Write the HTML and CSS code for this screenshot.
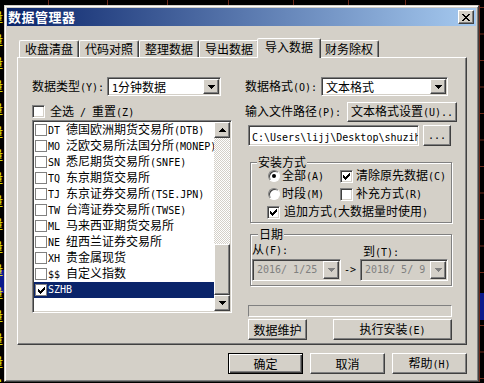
FILE: index.html
```html
<!DOCTYPE html>
<html lang="zh-CN">
<head>
  <meta charset="UTF-8" />
  <title>数据管理器</title>
  <link rel="stylesheet" href="styles.css">
</head>
<body>

<div class="screen">
  <div class="chart-top"></div>
  <div class="middle">
    <div class="chart-left">
      <div class="axis-text">量<br>量<br>量<br>量<br>量<br>量<br>量<br>量<br>量<br>量<br>量<br>量<br>量<br>量<br>量<br>量<br>量</div>
    </div>

    <div class="dialog">
      <div class="titlebar">
        <span class="title">数据管理器</span>
        <span class="btn close-btn">
          <svg width="8" height="7" viewBox="0 0 8 7" shape-rendering="crispEdges"><path d="M0 0h2v1H0zM6 0h2v1H6zM1 1h2v1H1zM5 1h2v1H5zM2 2h4v1H2zM3 3h2v1H3zM2 4h4v1H2zM1 5h2v1H1zM5 5h2v1H5zM0 6h2v1H0zM6 6h2v1H6z"/></svg>
        </span>
      </div>

      <div class="tabs">
        <div class="tab">收盘清盘</div>
        <div class="tab">代码对照</div>
        <div class="tab">整理数据</div>
        <div class="tab">导出数据</div>
        <div class="tab active">导入数据</div>
        <div class="tab">财务除权</div>
      </div>

      <div class="panel">
        <!-- left: market list -->
        <div class="col-left">
          <div class="field-row">
            <span class="label-type">数据类型<span class="m">(Y):</span></span>
            <div class="combo combo-type">
              <span class="combo-text"><span class="m">1</span>分钟数据</span>
              <span class="btn drop-btn"><svg width="7" height="4" viewBox="0 0 7 4" shape-rendering="crispEdges"><path d="M0 0h7v1H0zM1 1h5v1H1zM2 2h3v1H2zM3 3h1v1H3z"/></svg></span>
            </div>
          </div>

          <div class="check-row">
            <span class="check"></span>
            <span class="item-text">全选<span class="m"> / </span>重置<span class="m">(Z)</span></span>
          </div>

          <div class="listbox">
            <div class="items">
              <div class="item"><span class="mini-check"></span><span class="item-text"><span class="m">DT </span>德国欧洲期货交易所<span class="m">(DTB)</span></span></div>
              <div class="item"><span class="mini-check"></span><span class="item-text"><span class="m">MO </span>泛欧交易所法国分所<span class="m">(MONEP)</span></span></div>
              <div class="item"><span class="mini-check"></span><span class="item-text"><span class="m">SN </span>悉尼期货交易所<span class="m">(SNFE)</span></span></div>
              <div class="item"><span class="mini-check"></span><span class="item-text"><span class="m">TQ </span>东京期货交易所</span></div>
              <div class="item"><span class="mini-check"></span><span class="item-text"><span class="m">TJ </span>东京证券交易所<span class="m">(TSE.JPN)</span></span></div>
              <div class="item"><span class="mini-check"></span><span class="item-text"><span class="m">TW </span>台湾证券交易所<span class="m">(TWSE)</span></span></div>
              <div class="item"><span class="mini-check"></span><span class="item-text"><span class="m">ML </span>马来西亚期货交易所</span></div>
              <div class="item"><span class="mini-check"></span><span class="item-text"><span class="m">NE </span>纽西兰证券交易所</span></div>
              <div class="item"><span class="mini-check"></span><span class="item-text"><span class="m">XH </span>贵金属现货</span></div>
              <div class="item"><span class="mini-check"></span><span class="item-text"><span class="m">$$ </span>自定义指数</span></div>
              <div class="item selected"><span class="mini-check"><svg width="7" height="7" viewBox="0 0 7 7" shape-rendering="crispEdges"><path d="M6 0h1v3H6zM5 1h1v3H5zM4 2h1v3H4zM3 3h1v3H3zM2 4h1v3H2zM1 3h1v3H1zM0 2h1v3H0z"/></svg></span><span class="item-text m">SZHB</span></div>
            </div>
            <div class="scrollbar">
              <span class="btn sb-btn"><svg width="7" height="4" viewBox="0 0 7 4" shape-rendering="crispEdges"><path d="M3 0h1v1H3zM2 1h3v1H2zM1 2h5v1H1zM0 3h7v1H0z"/></svg></span>
              <span class="btn sb-thumb"></span>
              <span class="btn sb-btn"><svg width="7" height="4" viewBox="0 0 7 4" shape-rendering="crispEdges"><path d="M0 0h7v1H0zM1 1h5v1H1zM2 2h3v1H2zM3 3h1v1H3z"/></svg></span>
            </div>
          </div>
        </div>

        <!-- right: import options -->
        <div class="col-right">
          <div class="field-row">
            <span class="label-format">数据格式<span class="m">(O):</span></span>
            <div class="combo combo-format">
              <span class="combo-text">文本格式</span>
              <span class="btn drop-btn"><svg width="7" height="4" viewBox="0 0 7 4" shape-rendering="crispEdges"><path d="M0 0h7v1H0zM1 1h5v1H1zM2 2h3v1H2zM3 3h1v1H3z"/></svg></span>
            </div>
          </div>

          <div class="path-row">
            <span>输入文件路径<span class="m">(P):</span></span>
            <span class="btn btn-textfmt"><span>文本格式设置<span class="m">(U)..</span></span></span>
          </div>

          <div class="file-row">
            <div class="input"><span class="m">C:\Users\lijj\Desktop\shuzihb</span></div>
            <span class="btn btn-browse"><span class="m">...</span></span>
          </div>

          <fieldset class="group group-mode">
            <legend>安装方式</legend>
            <div class="opt-grid">
              <span class="opt"><span class="radio on"></span><span>全部<span class="m">(A)</span></span></span>
              <span class="opt opt-check"><span class="check"><svg width="7" height="7" viewBox="0 0 7 7" shape-rendering="crispEdges"><path d="M6 0h1v3H6zM5 1h1v3H5zM4 2h1v3H4zM3 3h1v3H3zM2 4h1v3H2zM1 3h1v3H1zM0 2h1v3H0z"/></svg></span><span>清除原先数据<span class="m">(C)</span></span></span>
              <span class="opt"><span class="radio"></span><span>时段<span class="m">(M)</span></span></span>
              <span class="opt opt-check"><span class="check"></span><span>补充方式<span class="m">(R)</span></span></span>
              <span class="opt opt-check opt-wide"><span class="check"><svg width="7" height="7" viewBox="0 0 7 7" shape-rendering="crispEdges"><path d="M6 0h1v3H6zM5 1h1v3H5zM4 2h1v3H4zM3 3h1v3H3zM2 4h1v3H2zM1 3h1v3H1zM0 2h1v3H0z"/></svg></span><span>追加方式<span class="m">(</span>大数据量时使用<span class="m">)</span></span></span>
            </div>
          </fieldset>

          <fieldset class="group group-date">
            <legend>日期</legend>
            <div class="date-labels">
              <span class="date-from">从<span class="m">(F):</span></span>
              <span class="date-to">到<span class="m">(T):</span></span>
            </div>
            <div class="date-row">
              <div class="date-pick date-start">
                <span class="m date-text">2016/ 1/25</span>
                <span class="btn date-btn"><svg width="7" height="4" viewBox="0 0 7 4" shape-rendering="crispEdges"><path d="M0 0h7v1H0zM1 1h5v1H1zM2 2h3v1H2zM3 3h1v1H3z"/></svg></span>
              </div>
              <span class="m arrow-to">-&gt;</span>
              <div class="date-pick date-end">
                <span class="m date-text">2018/ 5/ 9</span>
                <span class="btn date-btn"><svg width="7" height="4" viewBox="0 0 7 4" shape-rendering="crispEdges"><path d="M0 0h7v1H0zM1 1h5v1H1zM2 2h3v1H2zM3 3h1v1H3z"/></svg></span>
              </div>
            </div>
          </fieldset>

          <div class="progress"></div>

          <div class="action-row">
            <span class="btn btn-maint">数据维护</span>
            <span class="btn btn-install"><span>执行安装<span class="m">(E)</span></span></span>
          </div>
        </div>
      </div>

      <div class="dialog-buttons">
        <span class="btn btn-dlg default">确定</span>
        <span class="btn btn-dlg">取消</span>
        <span class="btn btn-dlg"><span>帮助<span class="m">(H)</span></span></span>
      </div>
    </div>

    <div class="chart-right"></div>
  </div>
</div>

</body>
</html>
```

FILE: styles.css
```css
* {
  box-sizing: border-box;
}

html, body {
  margin: 0;
  padding: 0;
  background: #000;
}

body {
  font-family: "Noto Sans CJK SC", "Noto Sans", sans-serif;
  font-size: 12px;
  line-height: 14px;
  color: #000;
}

.m {
  font-family: "DejaVu Sans Mono", "Liberation Mono", monospace;
  font-size: 10px;
}

/* chart behind the dialog */
.screen {
  width: 484px;
  height: 383px;
  overflow: hidden;
  background: #000;
}

.chart-top {
  height: 5px;
  background:
    linear-gradient(#6e2a1a, #6e2a1a) 48px 0 / 1px 100% no-repeat,
    linear-gradient(#6e2a1a, #6e2a1a) 107px 0 / 1px 100% no-repeat,
    linear-gradient(#6e2a1a, #6e2a1a) 167px 0 / 1px 100% no-repeat,
    linear-gradient(#6e2a1a, #6e2a1a) 228px 0 / 1px 100% no-repeat,
    linear-gradient(#6e2a1a, #6e2a1a) 293px 0 / 1px 100% no-repeat,
    linear-gradient(#6e2a1a, #6e2a1a) 348px 0 / 1px 100% no-repeat,
    linear-gradient(#6e2a1a, #6e2a1a) 405px 0 / 1px 100% no-repeat,
    #000;
}

.middle {
  display: flex;
  height: 377px;
}

.chart-left {
  width: 4px;
  overflow: hidden;
  background: linear-gradient(#0a1a8c, #0a1a8c) 0 265px / 4px 23px no-repeat, #000;
}

.axis-text {
  margin-left: -9px;
  color: #ffff00;
  font-size: 12px;
  line-height: 23px;
}

.chart-right {
  width: 5px;
  background:
    linear-gradient(#6e2a1a, #6e2a1a) 0 0 / 1px 100% no-repeat,
    linear-gradient(#0a1a8c, #0a1a8c) 1px 288px / 4px 27px no-repeat,
    linear-gradient(#6e2a1a 0 1px, transparent 1px) 0 2px / 5px 26.5px repeat-y,
    #000;
}

/* window */
.dialog {
  width: 475px;
  height: 377px;
  padding: 2px;
  background: #d4d0c8;
  border: 1px solid;
  border-color: #d4d0c8 #404040 #404040 #d4d0c8;
  box-shadow: inset 1px 1px #fff, inset -1px -1px #808080;
}

.titlebar {
  height: 18px;
  display: flex;
  align-items: center;
  justify-content: space-between;
  padding: 0 2px 0 1px;
  background: linear-gradient(90deg, #0a246a, #a6caf0);
}

.title {
  color: #fff;
  font-weight: bold;
  font-size: 13px;
  letter-spacing: 0.5px;
}

.btn {
  display: flex;
  align-items: center;
  justify-content: center;
  background: #d4d0c8;
  border: 1px solid;
  border-color: #fff #404040 #404040 #fff;
  box-shadow: inset -1px -1px #808080;
  white-space: nowrap;
}

.close-btn {
  width: 16px;
  height: 14px;
}

/* tabs */
.tabs {
  display: flex;
  align-items: flex-end;
  height: 19px;
  margin: 12px 0 0 12px;
}

.tab {
  height: 17px;
  padding: 0 5px;
  line-height: 15px;
  border: 1px solid;
  border-bottom: none;
  border-color: #fff #404040 transparent #fff;
  border-radius: 2px 2px 0 0;
  box-shadow: inset -1px 0 #808080;
}

.tab.active {
  position: relative;
  height: 20px;
  margin: 0 -2px -1px;
  padding: 0 7px;
  line-height: 15px;
  background: #d4d0c8;
}

.panel {
  width: 450px;
  height: 288px;
  margin-left: 10px;
  padding: 19px 0 0 14px;
  display: flex;
  gap: 13px;
  border: 1px solid;
  border-color: #fff #404040 #404040 #fff;
  box-shadow: inset -1px -1px #808080;
}

.col-left {
  width: 200px;
}

.col-right {
  width: 212px;
}

.field-row {
  display: flex;
  align-items: center;
  height: 19px;
}

.label-type {
  width: 75px;
}

.label-format {
  width: 76px;
}

/* sunken controls */
.combo,
.input,
.listbox,
.date-pick {
  border: 1px solid;
  border-color: #808080 #fff #fff #808080;
  box-shadow: inset 1px 1px #404040, inset -1px -1px #d4d0c8;
  background: #fff;
  padding: 1px;
}

.combo {
  height: 19px;
  display: flex;
}

.combo-type {
  width: 114px;
}

.combo-format {
  width: 127px;
}

.combo-text {
  flex: 1;
  padding-left: 3px;
  line-height: 15px;
}

.drop-btn {
  width: 16px;
  height: 15px;
}

.check {
  width: 13px;
  height: 13px;
  flex-shrink: 0;
  display: flex;
  align-items: center;
  justify-content: center;
  background: #fff;
  border: 1px solid;
  border-color: #808080 #fff #fff #808080;
  box-shadow: inset 1px 1px #404040, inset -1px -1px #d4d0c8;
}

.radio {
  width: 12px;
  height: 12px;
  flex-shrink: 0;
  display: flex;
  align-items: center;
  justify-content: center;
  border-radius: 50%;
  background: #fff;
  border: 1px solid;
  border-color: #808080 #fff #fff #808080;
  box-shadow: inset 1px 1px #404040;
}

.radio.on::after {
  content: "";
  width: 4px;
  height: 4px;
  border-radius: 50%;
  background: #000;
}

.check-row {
  display: flex;
  align-items: center;
  gap: 5px;
  height: 13px;
  margin-top: 9px;
}

/* market list */
.listbox {
  display: flex;
  height: 193px;
  margin-top: 2px;
}

.items {
  flex: 1;
  overflow: hidden;
}

.item {
  display: flex;
  align-items: center;
  height: 16px;
  padding-left: 1px;
  white-space: nowrap;
}

.item.selected {
  background: #0a246a;
  color: #fff;
}

.item-text {
  white-space: pre;
}

.mini-check {
  width: 12px;
  height: 12px;
  flex-shrink: 0;
  margin-right: 1px;
  display: flex;
  align-items: center;
  justify-content: center;
  background: #fff;
  border: 1px solid #808080;
}

.scrollbar {
  width: 16px;
  display: flex;
  flex-direction: column;
  background: repeating-conic-gradient(#fff 0 25%, #d4d0c8 0 50%) 0 0 / 2px 2px;
}

.sb-btn {
  height: 16px;
}

.sb-thumb {
  height: 51px;
  margin-top: auto;
}

/* right column */
.path-row {
  display: flex;
  align-items: center;
  justify-content: space-between;
  height: 20px;
  margin-top: 6px;
}

.btn-textfmt {
  width: 110px;
  height: 20px;
}

.file-row {
  display: flex;
  margin-top: 3px;
  padding-left: 3px;
}

.input {
  width: 171px;
  height: 21px;
  padding-left: 3px;
  line-height: 17px;
  white-space: nowrap;
  overflow: hidden;
}

.btn-browse {
  width: 28px;
  height: 21px;
  margin-left: 4px;
}

.group {
  width: 202px;
  margin: 0 0 0 5px;
  padding: 0 0 1px 0;
  min-width: 0;
  border: 1px solid #808080;
  box-shadow: 1px 1px 0 #fff, inset 1px 1px 0 #fff;
}

.group legend {
  margin-left: 6px;
  padding: 0 1px;
  line-height: 12px;
  background: #d4d0c8;
}

.group-mode {
  margin-top: 10px;
}

.opt-grid {
  display: grid;
  grid-template-columns: 72px auto;
  grid-auto-rows: 18px;
  align-items: center;
  margin-top: -1px;
  padding-left: 17px;
}

.opt {
  display: flex;
  align-items: center;
  gap: 2px;
  white-space: nowrap;
}

.opt-check {
  gap: 3px;
}

.opt-wide {
  grid-column: 1 / -1;
  margin-left: -1px;
  gap: 4px;
}

.group-date {
  margin-top: 5px;
  padding: 0 0 4px 1px;
}

.date-labels {
  display: flex;
  height: 14px;
  margin-top: 2px;
}

.date-from {
  width: 111px;
}

.date-to {
  padding-top: 2px;
}

.date-row {
  display: flex;
  align-items: center;
  margin-top: 3px;
}

.date-pick {
  display: flex;
  height: 22px;
  background: #d4d0c8;
}

.date-start {
  width: 89px;
}

.date-end {
  width: 88px;
}

.date-text {
  flex: 1;
  padding-left: 3px;
  line-height: 18px;
  white-space: pre;
  color: #808080;
}

.date-btn {
  width: 16px;
  height: 18px;
}

.date-btn svg {
  fill: #808080;
}

.arrow-to {
  width: 19px;
  padding-left: 3px;
}

.progress {
  width: 204px;
  height: 12px;
  margin: 19px 0 0 3px;
  border: 1px solid;
  border-color: #808080 #fff #fff #808080;
}

.action-row {
  display: flex;
  margin-top: 2px;
  padding-left: 3px;
}

.btn-maint {
  width: 59px;
  height: 21px;
}

.btn-install {
  width: 119px;
  height: 21px;
  margin-left: 26px;
}

/* OK / Cancel / Help */
.dialog-buttons {
  display: flex;
  justify-content: flex-end;
  gap: 7px;
  margin-top: 8px;
  padding-right: 9px;
}

.btn-dlg {
  width: 75px;
  height: 21px;
}

.btn-dlg.default {
  border-color: #000;
  box-shadow: inset 1px 1px #fff, inset -1px -1px #404040, inset -2px -2px #808080;
}
```
